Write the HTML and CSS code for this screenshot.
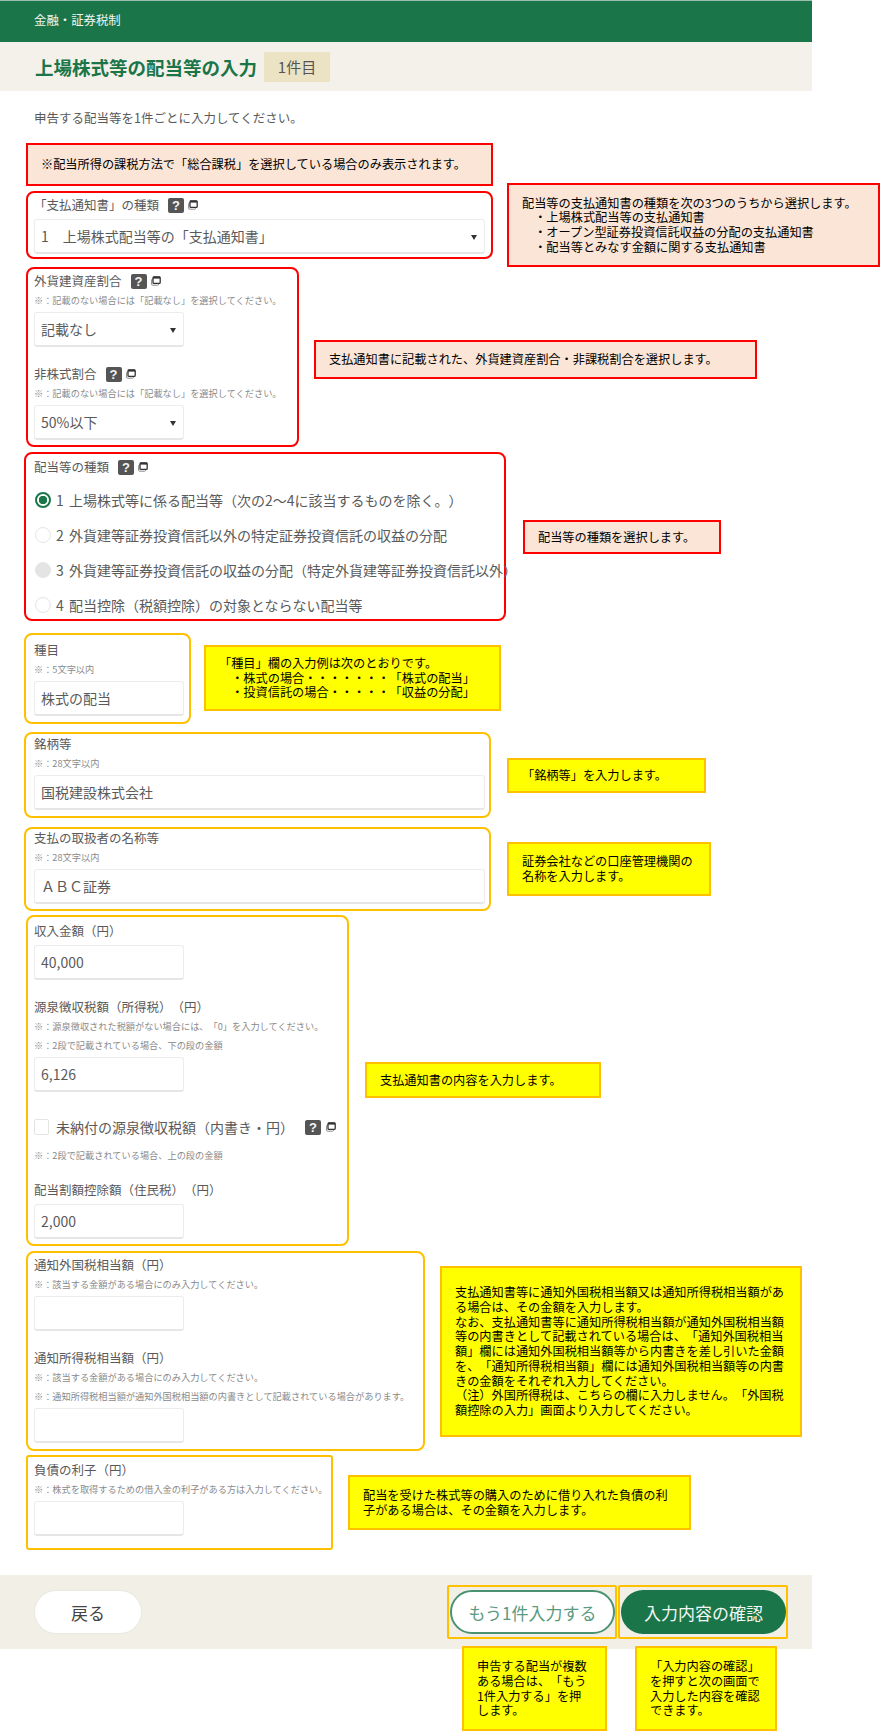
FILE: index.html
```html
<!DOCTYPE html>
<html lang="ja">
<head>
  <meta charset="UTF-8">
  <meta name="viewport" content="width=device-width, initial-scale=1.0">
  <title>上場株式等の配当等の入力</title>
  <link rel="stylesheet" href="styles.css">
</head>
<body>
  <svg class="icon-defs" width="0" height="0" aria-hidden="true">
    <symbol id="win" viewBox="0 0 10 10">
      <rect x="0.6" y="3" width="7" height="6.2" rx="1" fill="none" stroke="#8a8a8a" stroke-width="1"/>
      <rect x="2" y="1" width="7.2" height="6.4" rx="1" fill="#fff" stroke="#333" stroke-width="1.3"/>
      <rect x="2" y="0.6" width="7.2" height="2" fill="#333"/>
    </symbol>
  </svg>

  <header class="top-bar">金融・証券税制</header>
  <div class="title-bar">
    <h1>上場株式等の配当等の入力</h1>
    <span class="count-badge">1件目</span>
  </div>
  <p class="lead">申告する配当等を1件ごとに入力してください。</p>

  <div class="row row-notice">
    <div class="callout callout-red note-notice">※配当所得の課税方法で「総合課税」を選択している場合のみ表示されます。</div>
  </div>

  <div class="row row-slip">
    <section class="box box-red box-slip">
      <div class="label">「支払通知書」の種類 <span class="help">?</span><svg class="win"><use href="#win"/></svg></div>
      <div class="select-wrap select-full">
        <select><option>1　上場株式配当等の「支払通知書」</option></select>
      </div>
    </section>
    <div class="callout callout-red note-slip">配当等の支払通知書の種類を次の3つのうちから選択します。<br>　・上場株式配当等の支払通知書<br>　・オープン型証券投資信託収益の分配の支払通知書<br>　・配当等とみなす金額に関する支払通知書</div>
  </div>

  <div class="row row-ratio">
    <section class="box box-red box-ratio">
      <div class="label">外貨建資産割合 <span class="help">?</span><svg class="win"><use href="#win"/></svg></div>
      <div class="note">※：記載のない場合には「記載なし」を選択してください。</div>
      <div class="select-wrap">
        <select><option>記載なし</option></select>
      </div>
      <div class="label label-next">非株式割合 <span class="help">?</span><svg class="win"><use href="#win"/></svg></div>
      <div class="note">※：記載のない場合には「記載なし」を選択してください。</div>
      <div class="select-wrap">
        <select><option>50%以下</option></select>
      </div>
    </section>
    <div class="callout callout-red note-ratio">支払通知書に記載された、外貨建資産割合・非課税割合を選択します。</div>
  </div>

  <div class="row row-kind">
    <section class="box box-red box-kind">
      <div class="label">配当等の種類 <span class="help">?</span><svg class="win"><use href="#win"/></svg></div>
      <label class="radio-option radio-first"><input type="radio" name="kind" checked>1 上場株式等に係る配当等（次の2～4に該当するものを除く。）</label>
      <label class="radio-option"><input type="radio" name="kind">2 外貨建等証券投資信託以外の特定証券投資信託の収益の分配</label>
      <label class="radio-option"><input type="radio" name="kind" disabled>3 外貨建等証券投資信託の収益の分配（特定外貨建等証券投資信託以外）</label>
      <label class="radio-option"><input type="radio" name="kind">4 配当控除（税額控除）の対象とならない配当等</label>
    </section>
    <div class="callout callout-red note-kind">配当等の種類を選択します。</div>
  </div>

  <div class="row row-item">
    <section class="box box-gold box-item">
      <div class="label">種目</div>
      <div class="note">※：5文字以内</div>
      <input class="text-input" type="text" value="株式の配当">
    </section>
    <div class="callout callout-yellow note-item">「種目」欄の入力例は次のとおりです。<br>　・株式の場合・・・・・・・「株式の配当」<br>　・投資信託の場合・・・・・「収益の分配」</div>
  </div>

  <div class="row row-brand">
    <section class="box box-gold box-brand">
      <div class="label">銘柄等</div>
      <div class="note">※：28文字以内</div>
      <input class="text-input input-full" type="text" value="国税建設株式会社">
    </section>
    <div class="callout callout-yellow note-brand">「銘柄等」を入力します。</div>
  </div>

  <div class="row row-agent">
    <section class="box box-gold box-agent">
      <div class="label">支払の取扱者の名称等</div>
      <div class="note">※：28文字以内</div>
      <input class="text-input input-full" type="text" value="ＡＢＣ証券">
    </section>
    <div class="callout callout-yellow note-agent">証券会社などの口座管理機関の<br>名称を入力します。</div>
  </div>

  <div class="row row-income">
    <section class="box box-gold box-income">
      <div class="label">収入金額（円）</div>
      <input class="text-input" type="text" value="40,000">
      <div class="label label-next">源泉徴収税額（所得税）（円）</div>
      <div class="note">※：源泉徴収された税額がない場合には、「0」を入力してください。</div>
      <div class="note note-more">※：2段で記載されている場合、下の段の金額</div>
      <input class="text-input" type="text" value="6,126">
      <label class="check-line">
        <input type="checkbox">
        <span>未納付の源泉徴収税額（内書き・円）</span>
        <span class="help">?</span><svg class="win"><use href="#win"/></svg>
      </label>
      <div class="note note-check">※：2段で記載されている場合、上の段の金額</div>
      <div class="label label-credit">配当割額控除額（住民税）（円）</div>
      <input class="text-input" type="text" value="2,000">
    </section>
    <div class="callout callout-yellow note-income">支払通知書の内容を入力します。</div>
  </div>

  <div class="row row-foreign">
    <section class="box box-gold box-foreign">
      <div class="label">通知外国税相当額（円）</div>
      <div class="note">※：該当する金額がある場合にのみ入力してください。</div>
      <input class="text-input" type="text">
      <div class="label label-next">通知所得税相当額（円）</div>
      <div class="note">※：該当する金額がある場合にのみ入力してください。</div>
      <div class="note note-more">※：通知所得税相当額が通知外国税相当額の内書きとして記載されている場合があります。</div>
      <input class="text-input" type="text">
    </section>
    <div class="callout callout-yellow note-foreign">支払通知書等に通知外国税相当額又は通知所得税相当額があ<br>る場合は、その金額を入力します。<br>なお、支払通知書等に通知所得税相当額が通知外国税相当額<br>等の内書きとして記載されている場合は、「通知外国税相当<br>額」欄には通知外国税相当額等から内書きを差し引いた金額<br>を、「通知所得税相当額」欄には通知外国税相当額等の内書<br>きの金額をそれぞれ入力してください。<br>（注）外国所得税は、こちらの欄に入力しません。「外国税<br>額控除の入力」画面より入力してください。</div>
  </div>

  <div class="row row-debt">
    <section class="box box-gold box-debt">
      <div class="label">負債の利子（円）</div>
      <div class="note">※：株式を取得するための借入金の利子がある方は入力してください。</div>
      <input class="text-input" type="text">
    </section>
    <div class="callout callout-yellow note-debt">配当を受けた株式等の購入のために借り入れた負債の利<br>子がある場合は、その金額を入力します。</div>
  </div>

  <footer class="action-bar">
    <button class="btn btn-back" type="button">戻る</button>
    <div class="action-right">
      <div class="btn-frame"><button class="btn btn-more" type="button">もう1件入力する</button></div>
      <div class="btn-frame"><button class="btn btn-next" type="button">入力内容の確認</button></div>
    </div>
  </footer>

  <div class="action-notes">
    <div class="callout callout-yellow note-more-btn">申告する配当が複数<br>ある場合は、「もう<br>1件入力する」を押<br>します。</div>
    <div class="callout callout-yellow note-next-btn">「入力内容の確認」<br>を押すと次の画面で<br>入力した内容を確認<br>できます。</div>
  </div>
</body>
</html>
```

FILE: styles.css
```css
body {
  margin: 0;
  width: 880px;
  height: 1732px;
  overflow: hidden;
  background: #fff;
  color: #5a5a5a;
  font-family: "Noto Sans CJK JP", "Noto Sans", sans-serif;
  text-spacing-trim: space-all;
}
.icon-defs {
  position: absolute;
}
.top-bar {
  box-sizing: border-box;
  width: 812px;
  height: 42px;
  padding-left: 34px;
  border-top: 1px solid #9dbfae;
  background: #1a7548;
  color: #f2f6f3;
  font-size: 12.4px;
  line-height: 38px;
}
.title-bar {
  display: flex;
  align-items: center;
  width: 812px;
  height: 49px;
  padding-left: 35px;
  box-sizing: border-box;
  background: #f4f1ea;
}
h1 {
  margin: 0;
  color: #1a7548;
  font-size: 18.5px;
  font-weight: 700;
  line-height: 26px;
}
.count-badge {
  width: 66px;
  height: 30px;
  margin-left: 7px;
  background: #ebe3c3;
  color: #555;
  font-size: 15px;
  line-height: 30px;
  text-align: center;
}
.lead {
  margin: 18px 0 0 34px;
  font-size: 12.5px;
  line-height: 18px;
}

/* rows: an outlined block plus its explanatory callout */
.row {
  display: flex;
  align-items: flex-start;
  padding-left: 26px;
}
.row-notice { margin-top: 16px; }
.row-slip { margin-top: 5px; }
.row-ratio { margin-top: 8px; }
.row-kind { margin-top: 5px; padding-left: 24px; }
.row-item { margin-top: 12px; padding-left: 24px; }
.row-brand { margin-top: 8px; padding-left: 24px; }
.row-agent { margin-top: 9px; padding-left: 24px; }
.row-income { margin-top: 4px; }
.row-foreign { margin-top: 5px; }
.row-debt { margin-top: 4px; }

.box {
  box-sizing: border-box;
  flex: none;
  padding-left: 6px;
  border: 2px solid;
  border-radius: 8px;
}
.box-red { border-color: #f00; }
.box-gold { border-color: #ffc000; }
.box-slip { width: 467px; height: 68px; padding-top: 3px; }
.box-ratio { width: 273px; height: 180px; padding-top: 3px; }
.box-kind { width: 482px; height: 169px; padding-top: 4px; padding-left: 8px; }
.box-item { width: 167px; height: 91px; padding-top: 6px; padding-left: 8px; }
.box-brand { width: 467px; height: 86px; padding-top: 1px; padding-left: 8px; }
.box-agent { width: 467px; height: 84px; padding-left: 8px; }
.box-income { width: 323px; height: 331px; padding-top: 5px; }
.box-foreign { width: 399px; height: 200px; padding-top: 3px; }
.box-debt { width: 307px; height: 95px; padding-top: 4px; border-radius: 3px; }

.label {
  display: flex;
  align-items: center;
  height: 18px;
  font-size: 12.5px;
  line-height: 18px;
  white-space: nowrap;
}
.label-next { margin-top: 18px; }
.label-credit { margin-top: 19px; }
.note {
  margin-top: 3px;
  color: #8a8a8a;
  font-size: 9.2px;
  line-height: 14px;
  white-space: nowrap;
}
.note-more { margin-top: 5px; }
.note-check { margin-top: 12px; }

.help {
  flex: none;
  width: 16px;
  height: 15px;
  margin-left: 9px;
  border-radius: 2px;
  background: #555;
  color: #f4f4f4;
  font-family: "Liberation Sans", sans-serif;
  font-size: 13px;
  font-weight: 700;
  line-height: 15px;
  text-align: center;
}
.win {
  flex: none;
  width: 10px;
  height: 10px;
  margin-left: 4px;
}

.select-wrap {
  position: relative;
  width: 150px;
  margin-top: 5px;
}
.select-full { width: 451px; }
.select-wrap::after {
  content: "";
  position: absolute;
  top: 16px;
  right: 8px;
  border-top: 5px solid #333;
  border-left: 3.5px solid transparent;
  border-right: 3.5px solid transparent;
}
select, .text-input {
  display: block;
  box-sizing: border-box;
  width: 150px;
  height: 35px;
  margin: 5px 0 0;
  padding: 0 6px;
  border: 1px solid #ececec;
  border-bottom: 2px solid #e6e6e6;
  border-radius: 3px;
  background: #fff;
  color: #5a5a5a;
  font-family: inherit;
  font-size: 14px;
}
select {
  width: 100%;
  margin: 0;
  appearance: none;
}
.input-full { width: 451px; }

.radio-option {
  display: flex;
  align-items: center;
  width: 474px;
  height: 20px;
  margin-top: 15px;
  overflow: hidden;
  font-size: 14px;
  line-height: 20px;
  word-spacing: 2px;
  white-space: nowrap;
}
.radio-first { margin-top: 14px; }
.radio-option input {
  flex: none;
  box-sizing: border-box;
  width: 16px;
  height: 16px;
  margin: 0 5px 0 1px;
  border: 1px solid #e4e4e4;
  border-radius: 50%;
  background: #fff;
  appearance: none;
}
.radio-option input:checked {
  border: 2px solid #1a7548;
  background: radial-gradient(circle, #1a7548 0 4px, #fff 4.5px);
}
.radio-option input:disabled {
  background: #e4e4e4;
}

.check-line {
  display: flex;
  align-items: center;
  height: 18px;
  margin-top: 26px;
  font-size: 14px;
  white-space: nowrap;
}
.check-line input {
  flex: none;
  box-sizing: border-box;
  width: 15px;
  height: 16px;
  margin: 0 7px 0 0;
  border: 1px solid #e4e4e4;
  border-radius: 2px;
  background: #fff;
  appearance: none;
}
.check-line .help { margin-left: 11px; }
.check-line .win { margin-left: 5px; }

/* callouts */
.callout {
  display: flex;
  align-items: center;
  flex: none;
  box-sizing: border-box;
  padding-left: 13px;
  border: 2px solid;
  color: #000;
  font-size: 12.2px;
  line-height: 14.7px;
  white-space: nowrap;
}
.callout-red { border-color: #f00; background: #fbe5d6; }
.callout-yellow { border-color: #ffc000; background: #ff0; }
.note-notice { width: 467px; height: 43px; }
.note-slip { width: 373px; height: 84px; margin: -8px 0 -8px 14px; }
.note-ratio { width: 443px; height: 39px; margin: 73px 0 0 15px; }
.note-kind { width: 198px; height: 34px; margin: 68px 0 0 17px; }
.note-item { width: 297px; height: 66px; margin: 12px 0 0 13px; }
.note-brand { width: 199px; height: 35px; margin: 26px 0 0 16px; }
.note-agent { width: 204px; height: 54px; margin: 15px 0 0 16px; }
.note-income { width: 236px; height: 36px; margin: 147px 0 0 16px; }
.note-foreign { width: 362px; height: 171px; margin: 15px 0 0 15px; }
.note-debt { width: 343px; height: 55px; margin: 20px 0 0 15px; }
.note-more-btn { width: 145px; height: 85px; }
.note-next-btn { width: 142px; height: 85px; }

/* footer */
.action-bar {
  display: flex;
  align-items: center;
  justify-content: space-between;
  box-sizing: border-box;
  width: 812px;
  height: 74px;
  margin-top: 25px;
  padding: 0 24px 0 34px;
  background: #f2efe6;
}
.action-right {
  display: flex;
  gap: 1px;
}
.btn-frame {
  box-sizing: border-box;
  display: flex;
  align-items: center;
  justify-content: flex-end;
  width: 170px;
  height: 54px;
  border: 2px solid #ffc000;
  border-radius: 2px;
}
.btn {
  box-sizing: border-box;
  height: 44px;
  border-radius: 22px;
  font-family: inherit;
  font-size: 17px;
  cursor: pointer;
}
.btn-back {
  width: 108px;
  border: 1px solid #e8e8e2;
  background: #fff;
  color: #444;
}
.btn-more {
  width: 165px;
  border: 2px solid #4a9273;
  background: #fff;
  color: #5a9a80;
}
.btn-next {
  width: 165px;
  border: 0;
  background: #1a7548;
  color: #f2f6f3;
}
.action-notes {
  display: flex;
  gap: 28px;
  margin: -3px 0 0 462px;
}
```
